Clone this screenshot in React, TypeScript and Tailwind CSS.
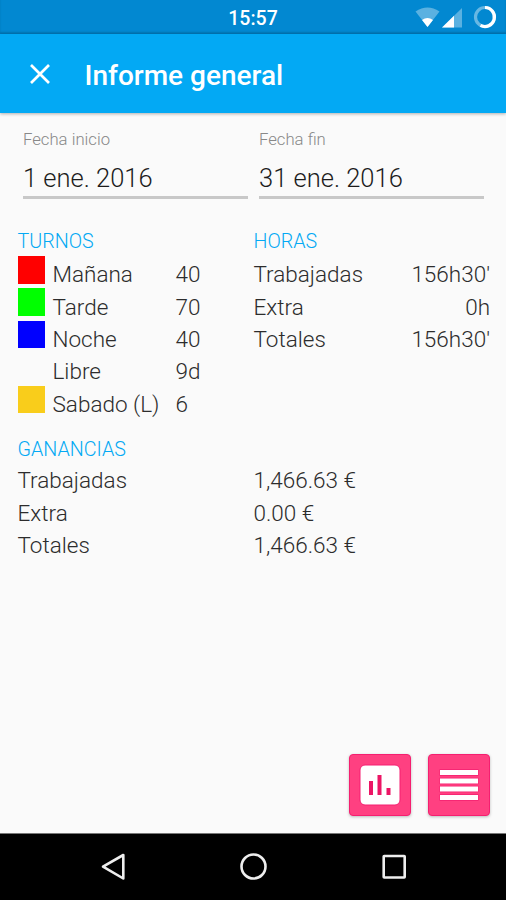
import type { ReactNode } from "react";

const shifts = [
  { name: "Mañana", value: "40", color: "bg-[#ff0000]" },
  { name: "Tarde", value: "70", color: "bg-[#00ff00]" },
  { name: "Noche", value: "40", color: "bg-[#0000ff]" },
  { name: "Libre", value: "9d", color: "bg-transparent" },
  { name: "Sabado (L)", value: "6", color: "bg-[#f9cd1b]" },
];

const hours = [
  ["Trabajadas", "156h30'"],
  ["Extra", "0h"],
  ["Totales", "156h30'"],
];

const earnings = [
  ["Trabajadas", "1,466.63 €"],
  ["Extra", "0.00 €"],
  ["Totales", "1,466.63 €"],
];

function StatusBar() {
  return (
    <div className="relative flex h-[34px] items-center justify-center bg-[#0288d1] pt-[3px] shadow-[inset_0_-2px_2px_rgba(0,0,0,0.14)]">
      <span className="text-[19.500px] font-medium leading-none text-white">15:57</span>
      <svg className="absolute top-0 right-0" width="96" height="34" viewBox="0 0 96 34">
        <path d="M5.500 11.500 Q17.500 3.500 29.500 11.500 L17.500 27Z" fill="#fff" fillOpacity=".35" />
        <path d="M12 20 Q17.500 16 23 20 L17.500 27Z" fill="#fff" />
        <path d="M32 27.500 52 8V27.500Z" fill="#fff" fillOpacity=".35" />
        <path d="M32 27.500 44 15.800V27.500Z" fill="#fff" />
        <circle cx="75" cy="17" r="9.500" fill="none" stroke="#fff" strokeOpacity=".4" strokeWidth="3.200" />
        <path d="M75 7.500A9.500 9.500 0 1 1 70.500 25.400" fill="none" stroke="#fff" strokeWidth="3.200" />
      </svg>
    </div>
  );
}

function DateField({ label, value }: { label: string; value: string }) {
  return (
    <div className="w-[225px] border-b-[3px] border-[#c8c8c8]">
      <div className="h-[34px] pt-px text-[16.700px] leading-[20px] text-[#888]">{label}</div>
      <div className="h-[33px] text-[25.500px] leading-[30px] text-[#1c1c1c]">{value}</div>
    </div>
  );
}

function Heading({ children }: { children: ReactNode }) {
  return <h2 className="h-[25px] pt-[2px] text-[19.700px] leading-[24px] text-[#03a9f4]">{children}</h2>;
}

function ActionButton({ label, children }: { label: string; children: ReactNode }) {
  return (
    <button aria-label={label} className="flex size-[62px] items-center justify-center rounded-[4px] border border-[#f51f70] bg-[#ff4081] shadow-[0_1px_3px_rgba(0,0,0,0.25)]">
      {children}
    </button>
  );
}

export default function App() {
  return (
    <div className="flex h-[900px] w-[506px] flex-col overflow-hidden bg-[#fafafa] font-['Roboto',sans-serif] font-light">
      <StatusBar />
      <header className="z-10 flex h-[79px] shrink-0 items-center bg-[#03a9f4] pl-[29px] shadow-[0_1px_3px_rgba(0,0,0,0.3)]">
        <svg width="22" height="22" viewBox="0 0 22 22" fill="none" stroke="#fff" strokeWidth="2.700">
          <path d="M2 2 20 20M20 2 2 20" />
        </svg>
        <h1 className="ml-[33.500px] pt-[5px] text-[28px] font-medium leading-[32px] text-white">Informe general</h1>
      </header>

      <main className="flex flex-1 flex-col">
        <section className="flex gap-[11px] pt-[16px] pl-[23px]">
          <DateField label="Fecha inicio" value="1 ene. 2016" />
          <DateField label="Fecha fin" value="31 ene. 2016" />
        </section>

        <section className="flex pt-[29px] pl-[17.500px]">
          <div className="w-[236px]">
            <Heading>TURNOS</Heading>
            <div className="pt-[3px]">
              {shifts.map((s) => (
                <div key={s.name} className="flex h-[32.400px]">
                  <div className={`size-[27.500px] ${s.color}`} />
                  <div className="ml-[7.500px] w-[123px] pt-[5.300px] text-[22.500px] leading-[26px] text-[#2c2c2c]">{s.name}</div>
                  <div className="pt-[5.300px] text-[22.500px] leading-[26px] text-[#2c2c2c]">{s.value}</div>
                </div>
              ))}
            </div>
          </div>
          <div className="w-[236.500px]">
            <Heading>HORAS</Heading>
            <div className="pt-[3px]">
              {hours.map(([name, value]) => (
                <div key={name} className="flex h-[32.400px] justify-between pt-[5.300px] text-[22.500px] leading-[26px] text-[#2c2c2c]">
                  <span>{name}</span>
                  <span>{value}</span>
                </div>
              ))}
            </div>
          </div>
        </section>

        <section className="pt-[18.500px] pl-[17.500px]">
          <Heading>GANANCIAS</Heading>
          <div className="pt-[6px]">
            {earnings.map(([name, value]) => (
              <div key={name} className="flex h-[32.300px] text-[22.500px] leading-[26px] text-[#2c2c2c]">
                <span className="w-[236px]">{name}</span>
                <span>{value}</span>
              </div>
            ))}
          </div>
        </section>

        <div className="mt-auto flex justify-end gap-[17px] pr-[16px] pb-[17px]">
          <ActionButton label="Gráfico">
            <svg width="42" height="42" viewBox="0 0 42 42">
              <rect x="1" y="1" width="40" height="40" rx="5" fill="#fff" stroke="#f51f70" strokeWidth="1" />
              <path d="M12 17V31M20.500 11V31M29.500 24V31" stroke="#ec1565" strokeWidth="4" />
            </svg>
          </ActionButton>
          <ActionButton label="Lista">
            <svg width="42" height="36" viewBox="0 0 42 36">
              <path d="M1.500 5.500H40.500M1.500 14H40.500M1.500 22H40.500M1.500 30.500H40.500" stroke="#f51f70" strokeWidth="6.500" />
              <path d="M2 5.500H40M2 14H40M2 22H40M2 30.500H40" stroke="#fff" strokeWidth="5" />
            </svg>
          </ActionButton>
        </div>
      </main>

      <nav className="flex h-[67px] shrink-0 border-t border-[#777] bg-black">
        <svg width="506" height="66" viewBox="0 0 506 66" fill="none" stroke="#eee" strokeWidth="2.600" strokeLinejoin="round">
          <path d="M103 32.700 123.300 21V44.500Z" />
          <circle cx="253.500" cy="32.500" r="12" />
          <rect x="383.700" y="22" width="21" height="21.500" rx=".5" />
        </svg>
      </nav>
    </div>
  );
}
